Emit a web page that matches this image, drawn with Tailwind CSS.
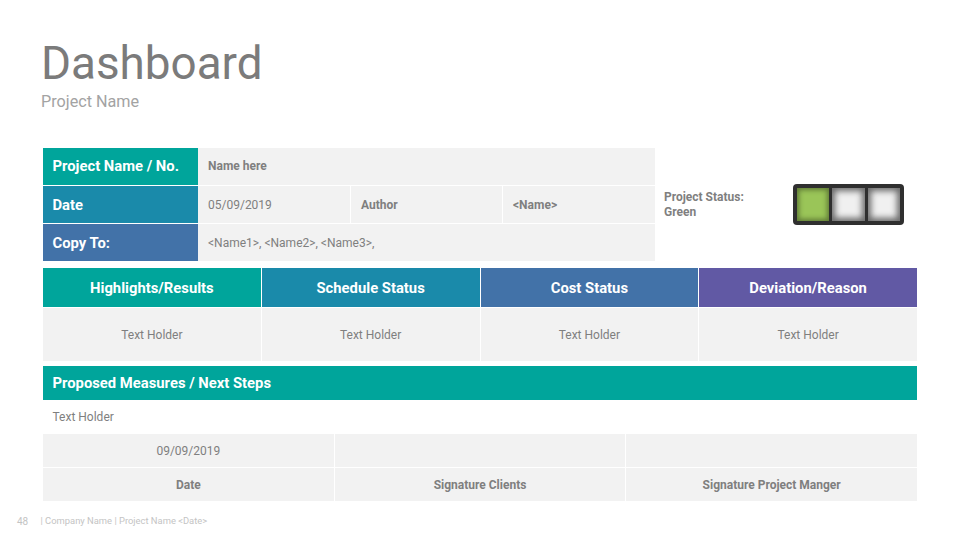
<!DOCTYPE html>
<html lang="en">
<head>
    <meta charset="UTF-8">
    <title>Dashboard</title>
    <script src="https://cdn.jsdelivr.net/npm/@tailwindcss/browser@4"></script>
</head>
<body class="bg-white w-[960px] h-[540px] overflow-hidden font-['Roboto',sans-serif] text-[#7f7f7f]">

    <!-- Title -->
    <div class="pl-[41px] pt-[37px] h-[148px]">
        <h1 class="text-[45.8px] leading-[53px] text-[#7b7b7b]">Dashboard</h1>
        <p class="text-[16.2px] leading-[24px] text-[#a3a3a3]">Project Name</p>
    </div>

    <!-- Project info -->
    <div class="flex ml-[43px] w-[874px] h-[120px]">
        <div class="w-[612px] grid grid-cols-[155px_152px_152px_153px] grid-rows-[37px_37px_37px] gap-y-px text-[12px]">
            <div class="flex items-center pl-[9.5px] bg-[#00a59b] text-white font-bold text-[14.8px]">Project Name / No.</div>
            <div class="col-span-3 flex items-center pl-[10px] pb-[2px] bg-[#f2f2f2] font-bold">Name here</div>
            <div class="flex items-center pl-[9.5px] pt-[2px] bg-[#1a8aaa] text-white font-bold text-[14.8px]">Date</div>
            <div class="flex items-center pl-[10px] bg-[#f2f2f2]">05/09/2019</div>
            <div class="flex items-center pl-[10px] bg-[#f2f2f2] border-l border-white font-bold">Author</div>
            <div class="flex items-center pl-[10px] bg-[#f2f2f2] border-l border-white font-bold">&lt;Name&gt;</div>
            <div class="flex items-center pl-[9.5px] pt-[1px] bg-[#4272a8] text-white font-bold text-[14.8px]">Copy To:</div>
            <div class="col-span-3 flex items-center pl-[10px] bg-[#f2f2f2]">&lt;Name1&gt;, &lt;Name2&gt;, &lt;Name3&gt;,</div>
        </div>

        <!-- Status -->
        <div class="flex items-start pt-[36px] pl-[9px]">
            <p class="w-[129px] pt-[6px] text-[12px] leading-[15px] font-bold">Project Status:<br>Green</p>
            <div class="flex gap-[3px] w-[111px] h-[41px] p-[4px] rounded-[4px] bg-[#2f2f2f]">
                <div class="flex-1 bg-[#9ac558] shadow-[inset_0_0_5px_2px_rgba(47,60,25,0.55)]"></div>
                <div class="flex-1 bg-[#f0f0f0] shadow-[inset_0_0_6px_3px_rgba(47,47,47,0.7)]"></div>
                <div class="flex-1 bg-[#f0f0f0] shadow-[inset_0_0_6px_3px_rgba(47,47,47,0.7)]"></div>
            </div>
        </div>
    </div>

    <!-- Status columns -->
    <div class="ml-[43px] w-[874px] grid grid-cols-4 grid-rows-[39px_53px] gap-x-px gap-y-px text-center">
        <div class="flex items-center justify-center pt-[1px] bg-[#00a59b] text-white font-bold text-[14.8px]">Highlights/Results</div>
        <div class="flex items-center justify-center pt-[1px] bg-[#1a8aaa] text-white font-bold text-[14.8px]">Schedule Status</div>
        <div class="flex items-center justify-center pt-[1px] bg-[#4272a8] text-white font-bold text-[14.8px]">Cost Status</div>
        <div class="flex items-center justify-center pt-[1px] bg-[#6159a4] text-white font-bold text-[14.8px]">Deviation/Reason</div>
        <div class="flex items-center justify-center bg-[#f2f2f2] text-[12px]">Text Holder</div>
        <div class="flex items-center justify-center bg-[#f2f2f2] text-[12px]">Text Holder</div>
        <div class="flex items-center justify-center bg-[#f2f2f2] text-[12px]">Text Holder</div>
        <div class="flex items-center justify-center bg-[#f2f2f2] text-[12px]">Text Holder</div>
    </div>

    <!-- Next steps -->
    <div class="ml-[43px] w-[874px] mt-[5px]">
        <div class="flex items-center h-[34px] pl-[9.5px] bg-[#00a59b] text-white font-bold text-[14.8px]">Proposed Measures / Next Steps</div>
        <div class="flex items-center h-[34px] pl-[9.5px] text-[12px]">Text Holder</div>
        <div class="grid grid-cols-3 grid-rows-[33px_33px] gap-x-px gap-y-px text-[12px]">
            <div class="flex items-center justify-center bg-[#f2f2f2]">09/09/2019</div>
            <div class="bg-[#f2f2f2]"></div>
            <div class="bg-[#f2f2f2]"></div>
            <div class="flex items-center justify-center bg-[#f2f2f2] font-bold">Date</div>
            <div class="flex items-center justify-center bg-[#f2f2f2] font-bold">Signature Clients</div>
            <div class="flex items-center justify-center bg-[#f2f2f2] font-bold">Signature Project Manger</div>
        </div>
    </div>

    <!-- Footer -->
    <div class="flex items-center h-[20px] mt-[10px] pl-[17px] text-[#c4c4c4]">
        <span class="w-[23.5px] text-[10px]">48</span>
        <span class="text-[9.4px]">| Company Name | Project Name &lt;Date&gt;</span>
    </div>

</body>
</html>
